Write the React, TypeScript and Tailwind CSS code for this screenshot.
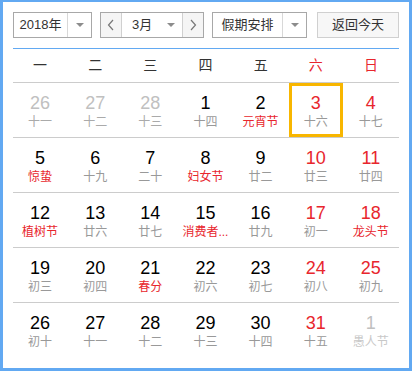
import React from "react";

type Day = {
	n: number;
	l: string;
	other?: boolean;
	redL?: boolean;
	sel?: boolean;
};

const weeks: Day[][] = [
	[
		{ n: 26, l: "十一", other: true },
		{ n: 27, l: "十二", other: true },
		{ n: 28, l: "十三", other: true },
		{ n: 1, l: "十四" },
		{ n: 2, l: "元宵节", redL: true },
		{ n: 3, l: "十六", sel: true },
		{ n: 4, l: "十七" },
	],
	[
		{ n: 5, l: "惊蛰", redL: true },
		{ n: 6, l: "十九" },
		{ n: 7, l: "二十" },
		{ n: 8, l: "妇女节", redL: true },
		{ n: 9, l: "廿二" },
		{ n: 10, l: "廿三" },
		{ n: 11, l: "廿四" },
	],
	[
		{ n: 12, l: "植树节", redL: true },
		{ n: 13, l: "廿六" },
		{ n: 14, l: "廿七" },
		{ n: 15, l: "消费者...", redL: true },
		{ n: 16, l: "廿九" },
		{ n: 17, l: "初一" },
		{ n: 18, l: "龙头节", redL: true },
	],
	[
		{ n: 19, l: "初三" },
		{ n: 20, l: "初四" },
		{ n: 21, l: "春分", redL: true },
		{ n: 22, l: "初六" },
		{ n: 23, l: "初七" },
		{ n: 24, l: "初八" },
		{ n: 25, l: "初九" },
	],
	[
		{ n: 26, l: "初十" },
		{ n: 27, l: "十一" },
		{ n: 28, l: "十二" },
		{ n: 29, l: "十三" },
		{ n: 30, l: "十四" },
		{ n: 31, l: "十五" },
		{ n: 1, l: "愚人节", other: true },
	],
];

const weekdays = ["一", "二", "三", "四", "五", "六", "日"];

function Caret() {
	return (
		<span className="block w-0 h-0 border-l-[4px] border-r-[4px] border-t-[4px] border-l-transparent border-r-transparent border-t-[#8c8c8c]" />
	);
}

function DayCell({ d, col }: { d: Day; col: number }) {
	const weekend = col >= 5;
	let numColor = "text-black";
	if (d.other) numColor = "text-[#c0c0c0]";
	else if (weekend) numColor = "text-[#e8262d]";
	let lunarColor = "text-[#999]";
	if (d.other) lunarColor = d.n === 1 ? "text-[#c8c8c8]" : "text-[#aaa]";
	else if (d.redL) lunarColor = "text-[#e8262d]";
	return (
		<div className="flex justify-start">
			<div
				className={
					"flex flex-col items-center w-[54px] h-[54px] pt-[6px] border-[3px] " +
					(d.sel ? "border-[#f8b600]" : "border-transparent")
				}
			>
				<span className={"text-[18px] leading-[22px] " + numColor}>{d.n}</span>
				<span className={"text-[12px] leading-[16px] whitespace-nowrap " + lunarColor}>
					{d.l}
				</span>
			</div>
		</div>
	);
}

export default function App() {
	return (
		<div
			className="w-[412px] h-[371px] bg-white"
			style={{ fontFamily: '"Liberation Sans", "Noto Sans CJK SC", sans-serif' }}
		>
			<div className="flex flex-col h-[371px] border-[#62a9f2] border-l-[3px] border-r-[3px] border-t-[2px] border-b-[3px] px-[10px] pt-[10px]">
				<div className="flex flex-row items-center h-[26px] text-[13px] text-[#333]">
					<div className="flex h-[26px] w-[79px] border border-[#a8a8a8]">
						<div className="flex items-center justify-center w-[54px] border-r border-[#d8d8d8]">
							2018年
						</div>
						<div className="flex flex-1 items-center justify-center">
							<Caret />
						</div>
					</div>
					<div className="flex h-[26px] w-[104px] ml-[8px] border border-[#a8a8a8]">
						<div className="flex items-center justify-center w-[21px] bg-[#f5f5f5] text-[#777] border-r border-[#d0d0d0]">
							<svg width="8" height="12" viewBox="0 0 8 12">
								<path d="M6 1 L1.5 6 L6 11" fill="none" stroke="#777" strokeWidth="1.2" />
							</svg>
						</div>
						<div className="flex flex-1 items-center pl-[10px] pr-[7px] justify-between">
							<span>3月</span>
							<Caret />
						</div>
						<div className="flex items-center justify-center w-[21px] bg-[#f5f5f5] border-l border-[#d0d0d0]">
							<svg width="8" height="12" viewBox="0 0 8 12">
								<path d="M2 1 L6.5 6 L2 11" fill="none" stroke="#777" strokeWidth="1.2" />
							</svg>
						</div>
					</div>
					<div className="flex h-[26px] w-[95px] ml-[8px] border border-[#a8a8a8]">
						<div className="flex items-center justify-center w-[70px] border-r border-[#d8d8d8]">
							假期安排
						</div>
						<div className="flex flex-1 items-center justify-center">
							<Caret />
						</div>
					</div>
					<div className="flex items-center justify-center h-[26px] w-[82px] ml-[10px] border border-[#d0d0d0] bg-[#f7f7f7]">
						返回今天
					</div>
				</div>
				<div className="mt-[10px] border-t border-[#62a9f2]">
					<div className="grid grid-cols-7 h-[33px] items-center text-[14px]">
						{weekdays.map((w, i) => (
							<div
								key={w}
								className={
									"text-center pr-[1px] " + (i >= 5 ? "text-[#e8262d]" : "text-[#333]")
								}
							>
								{w}
							</div>
						))}
					</div>
					{weeks.map((row, r) => (
						<div key={r} className="grid grid-cols-7 border-t border-[#cccccc] h-[55px]">
							{row.map((d, c) => (
								<DayCell key={c} d={d} col={c} />
							))}
						</div>
					))}
				</div>
			</div>
		</div>
	);
}
